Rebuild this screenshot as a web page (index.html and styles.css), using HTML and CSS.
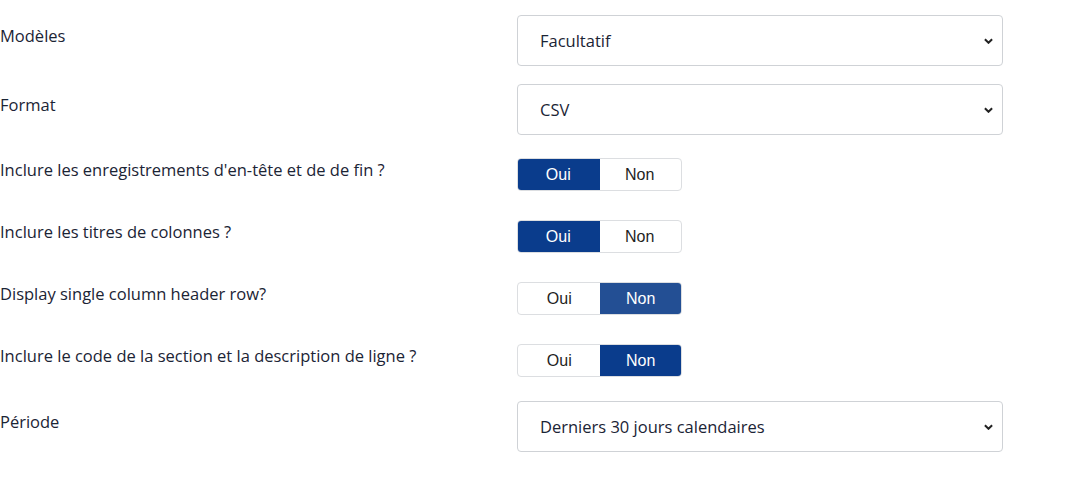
FILE: index.html
```html
<!DOCTYPE html>
<html lang="fr">
<head>
<meta charset="utf-8">
<link rel="stylesheet" href="styles.css">
</head>
<body>
<div class="form">
  <div class="row row-select">
    <div class="label">Modèles</div>
    <div class="select"><span>Facultatif</span><svg class="chev" viewBox="0 0 10 6" width="9" height="6"><path d="M1 1l4 4 4-4" fill="none" stroke="#222" stroke-width="2.2"/></svg></div>
  </div>
  <div class="row row-select">
    <div class="label">Format</div>
    <div class="select"><span>CSV</span><svg class="chev" viewBox="0 0 10 6" width="9" height="6"><path d="M1 1l4 4 4-4" fill="none" stroke="#222" stroke-width="2.2"/></svg></div>
  </div>
  <div class="row row-toggle">
    <div class="label">Inclure les enregistrements d'en-tête et de de fin ?</div>
    <div class="toggle"><span class="seg on">Oui</span><span class="seg">Non</span></div>
  </div>
  <div class="row row-toggle">
    <div class="label">Inclure les titres de colonnes ?</div>
    <div class="toggle"><span class="seg on">Oui</span><span class="seg">Non</span></div>
  </div>
  <div class="row row-toggle">
    <div class="label">Display single column header row?</div>
    <div class="toggle"><span class="seg">Oui</span><span class="seg on hover">Non</span></div>
  </div>
  <div class="row row-toggle">
    <div class="label">Inclure le code de la section et la description de ligne ?</div>
    <div class="toggle"><span class="seg">Oui</span><span class="seg on">Non</span></div>
  </div>
  <div class="row row-select last">
    <div class="label">Période</div>
    <div class="select"><span>Derniers 30 jours calendaires</span><svg class="chev" viewBox="0 0 10 6" width="9" height="6"><path d="M1 1l4 4 4-4" fill="none" stroke="#222" stroke-width="2.2"/></svg></div>
  </div>
</div>
</body>
</html>
```
FILE: styles.css
```css
html, body {
  margin: 0;
  padding: 0;
  background: #fff;
}
body {
  font-family: "Open Sans", "Noto Sans", sans-serif;
  color: #1b2435;
  font-size: 16.5px;
}
.form {
  display: flex;
  flex-direction: column;
  padding-top: 15px;
}
.row {
  display: flex;
  align-items: center;
}
.label {
  width: 517px;
  flex: none;
  line-height: 20px;
  margin-bottom: 10px;
}
.row-select { margin-bottom: 18px; }
.row-toggle { margin-bottom: 29px; }
.row-select + .row-toggle { margin-top: 5px; }
.row-toggle + .row-select { margin-top: -5px; }
.select {
  width: 486px;
  height: 51px;
  box-sizing: border-box;
  border: 1px solid #cfd2d6;
  border-radius: 4px;
  display: flex;
  align-items: center;
  justify-content: space-between;
  padding: 0 9px 0 22px;
  color: #1b2435;
  font-size: 16.5px;
}
.chev { display: block; }
.toggle {
  display: flex;
  width: 165px;
  height: 33px;
  box-sizing: border-box;
  border: 1px solid #dcdee1;
  border-radius: 4px;
  overflow: hidden;
  font-family: "Liberation Sans", Arial, sans-serif;
  font-size: 16px;
}
.seg {
  flex: 1;
  display: flex;
  align-items: center;
  justify-content: center;
  color: #1f1f1f;
}
.seg.on {
  background: #0a3c8c;
  color: #fff;
  margin: -1px;
}
.seg.on.hover { background: #234f94; }
```
